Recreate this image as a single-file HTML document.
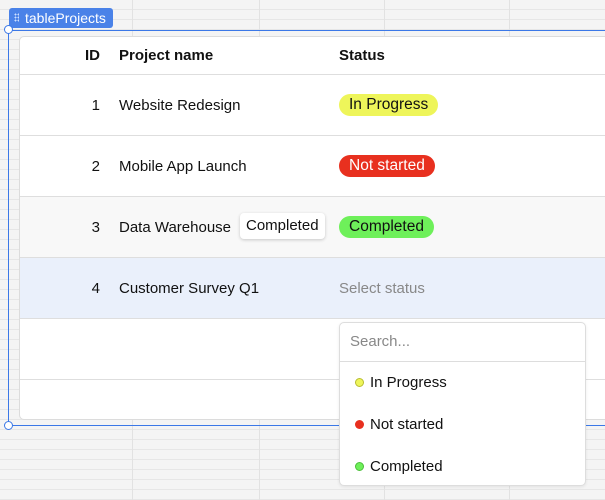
<html><head><style>
body{margin:0;width:605px;height:500px;overflow:hidden;position:relative;font-family:"Liberation Sans",sans-serif;
background-color:#f4f4f4;
background-image:linear-gradient(90deg,transparent 132px,#e2e2e2 132px,#e2e2e2 133px,transparent 133px,transparent 259px,#e2e2e2 259px,#e2e2e2 260px,transparent 260px,transparent 384px,#e2e2e2 384px,#e2e2e2 385px,transparent 385px,transparent 509px,#e2e2e2 509px,#e2e2e2 510px,transparent 510px),
repeating-linear-gradient(180deg,transparent 0,transparent 9px,#e6e6e6 9px,#e6e6e6 10px);}
.sel{position:absolute;left:8px;top:30px;width:620px;height:396px;border:1px solid #3b78e7;box-sizing:border-box;border-right:none;z-index:2}
.tag{position:absolute;left:9px;top:8px;height:20px;width:104px;background:#4a82e8;color:#fff;border-radius:3px;font-size:14px;line-height:20px;padding-left:16px;box-sizing:border-box}
.tag:before{content:"";position:absolute;left:5px;top:5px;width:5px;height:9px;background:radial-gradient(circle,#cfe0ff 0.8px,transparent 1px) 0 0/3px 3px}
.h{position:absolute;width:9px;height:9px;border:1.5px solid #3b78e7;border-radius:50%;background:#fff;box-sizing:border-box;z-index:3}
.card{position:absolute;left:19px;top:36px;width:600px;height:384px;background:#fff;border:1px solid #dcdcdc;border-radius:5px;box-sizing:border-box;overflow:hidden}
.row{position:absolute;left:0;width:100%;border-bottom:1px solid #dedede;box-sizing:border-box;font-size:15px;color:#111}
.row span{position:absolute}
.id{right:auto;width:80px;text-align:right;left:0}
.pill{border-radius:11px;padding:0 10px;height:22px;line-height:22px;top:50%;margin-top:-11px;font-size:15.5px}
.dd{position:absolute;left:339px;top:322px;width:247px;height:164px;background:#fff;border:1px solid #ddd;border-radius:5px;box-sizing:border-box;box-shadow:0 1px 3px rgba(0,0,0,.08);font-size:15px;color:#111;z-index:4}
.dd div{position:absolute;left:30px}
.dot{position:absolute;left:15px;width:9px;height:9px;border-radius:50%;box-sizing:border-box}
</style></head><body>
<div class="tag">tableProjects</div>
<div class="sel"></div>
<div class="h" style="left:4px;top:25px"></div>
<div class="h" style="left:4px;top:421px"></div>
<div class="card">
<div class="row" style="top:0;height:38px;font-weight:bold"><span class="id" style="top:10px">ID</span><span style="left:99px;top:10px">Project name</span><span style="left:319px;top:10px">Status</span></div>
<div class="row" style="top:38px;height:61px"><span class="id" style="top:22px">1</span><span style="left:99px;top:22px">Website Redesign</span><span class="pill" style="left:319px;background:#eef55a">In Progress</span></div>
<div class="row" style="top:99px;height:61px"><span class="id" style="top:22px">2</span><span style="left:99px;top:22px">Mobile App Launch</span><span class="pill" style="left:319px;background:#e8301f;color:#fff">Not started</span></div>
<div class="row" style="top:160px;height:61px;background:#f8f8f8"><span class="id" style="top:22px">3</span><span style="left:99px;top:22px">Data Warehouse</span><span class="pill" style="left:319px;background:#6ef05a">Completed</span></div>
<div class="row" style="top:221px;height:61px;background:#eaf0fb"><span class="id" style="top:22px">4</span><span style="left:99px;top:22px">Customer Survey Q1</span><span style="left:319px;top:22px;color:#888">Select status</span></div>
<div class="row" style="top:282px;height:61px"></div>
</div>
<div style="position:absolute;left:240px;top:213px;height:26px;padding:0 6px;line-height:26px;background:#fff;border-radius:4px;box-shadow:0 1px 3px rgba(0,0,0,.2);font-size:15px;color:#111">Completed</div>
<div class="dd">
<div style="left:10px;top:10px;color:#888">Search...</div>
<div style="left:0;top:38px;width:100%;border-top:1px solid #ddd"></div>
<span class="dot" style="top:55px;background:#eef55a;border:1px solid #b8bd30"></span><div style="top:51px">In Progress</div>
<span class="dot" style="top:97px;background:#e8301f"></span><div style="top:93px">Not started</div>
<span class="dot" style="top:139px;background:#6ef05a;border:1px solid #4cbf3a"></span><div style="top:135px">Completed</div>
</div>
</body></html>
